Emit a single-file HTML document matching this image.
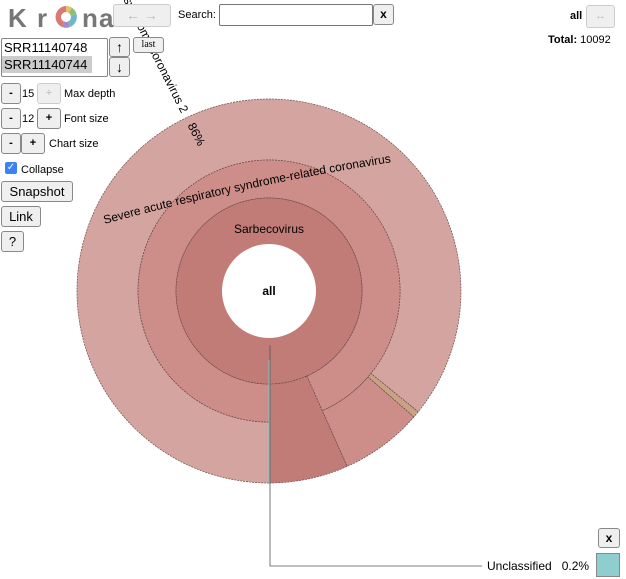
<!DOCTYPE html>
<html><head><style>
body{margin:0;width:626px;height:579px;overflow:hidden;background:#fff;font-family:"Liberation Sans",Arial,sans-serif;font-size:11px;position:relative}
.a{position:absolute}
.b{position:absolute;box-sizing:border-box;border:1px solid #888;border-radius:3px;background:#efefef;text-align:center;color:#000}
.d{color:#bbb;border-color:#ccc}
.L{position:absolute;top:3px;font-size:26px;font-weight:bold;color:#777}
</style></head><body>
<svg class="a" style="left:0;top:0" width="626" height="579">
<g stroke="#6e4a48" stroke-width="0.7" stroke-dasharray="2 1">
<path d="M269,483 A192 192 0 1 1 418.2,411.8 L370.8,373.4 A131 131 0 1 0 269,422 Z" fill="#d4a5a0"/>
<path d="M418.2,411.8 L413.9,417 L367.9,377 L370.8,373.4 Z" fill="#c8a283"/>
<path d="M413.9,417 A192 192 0 0 1 347.1,466.4 L322.3,410.7 A131 131 0 0 0 367.9,377 Z" fill="#cd8e8a"/>
<path d="M269,422 A131 131 0 1 1 322.3,410.7 L306.8,376 A93 93 0 1 0 269,384 Z" fill="#cd8e8a"/>
<circle cx="269" cy="291" r="93" fill="#c27c78"/>
<path d="M306.8,376 L347.1,466.4 A192 192 0 0 1 269,483 L269,384 A93 93 0 0 0 306.8,376 Z" fill="#c27c78"/>
</g>
<rect x="268.5" y="360" width="2" height="123" fill="#7fc8c8"/>
<circle cx="269" cy="291" r="47" fill="#fff"/>
<path d="M270,345 V566 H482" stroke="#555" stroke-width="0.8" fill="none"/>
<defs><path id="arc" d="M90,228 Q248,184 406,160"/></defs>
<text font-size="12" fill="#000" font-family="Liberation Sans,Arial,sans-serif"><textPath href="#arc" startOffset="50%" text-anchor="middle">Severe acute respiratory syndrome-related coronavirus</textPath></text>
<text x="269" y="233" font-size="12" text-anchor="middle" font-family="Liberation Sans,Arial,sans-serif">Sarbecovirus</text>
<text x="269" y="295" font-size="12" font-weight="bold" text-anchor="middle" font-family="Liberation Sans,Arial,sans-serif">all</text>
<g transform="translate(185,112) rotate(63)" font-size="12" font-family="Liberation Sans,Arial,sans-serif">
<text x="0" y="4" text-anchor="end">Severe acute respiratory syndrome coronavirus 2</text>
<text x="37" y="4" text-anchor="end">86%</text>
</g>
</svg>
<div class="L" style="left:8px">K</div>
<div class="L" style="left:37px">r</div>
<svg class="a" style="left:54px;top:5px" width="24" height="24"><g transform="translate(12,12)">
<path d="M0,0 L0,-11 A11 11 0 0 1 10.5,-3 Z" fill="#8fbf6e"/>
<path d="M0,0 L10.5,-3 A11 11 0 0 1 4,10 Z" fill="#6fb8c8"/>
<path d="M0,0 L4,10 A11 11 0 0 1 -4,10 Z" fill="#a888c8"/>
<path d="M0,0 L-4,10 A11 11 0 0 1 0,-11 Z" fill="#d87a72"/>
<path d="M0,0 L0,-11 A11 11 0 0 1 6,-9 Z" fill="#e8c070"/>
<circle r="5" fill="#fff"/></g></svg>
<div class="L" style="left:82px">n</div>
<div class="L" style="left:99px">a</div>
<div class="b d" style="left:113px;top:4px;width:58px;height:23px;font-size:14px;line-height:20px">← →</div>
<div class="a" style="left:178px;top:9px;font-size:11px">Search:</div>
<div class="a" style="left:219px;top:4px;width:152px;height:20px;border:1px solid #777;border-radius:2px"></div>
<div class="b" style="left:373px;top:4px;width:21px;height:21px;font-size:12px;line-height:18px;font-weight:bold">x</div>
<div class="a" style="left:570px;top:10px;font-weight:bold">all</div>
<div class="b d" style="left:586px;top:5px;width:29px;height:23px;line-height:20px">↔</div>
<div class="a" style="left:548px;top:34px"><b>Total:</b> 10092</div>
<div class="a" style="left:1px;top:38px;width:105px;height:37px;border:1px solid #888;border-radius:2px;font-size:13px;line-height:17px">
<div style="padding-left:2px">SRR11140748</div><div style="padding-left:2px;background:#ccc;width:88px">SRR11140744</div></div>
<div class="b" style="left:109px;top:37px;width:21px;height:20px;font-size:14px;line-height:18px">↑</div>
<div class="b" style="left:109px;top:57px;width:21px;height:20px;font-size:14px;line-height:18px">↓</div>
<div class="b" style="left:133px;top:37px;width:31px;height:16px;font-family:'Liberation Serif',serif;font-size:10px;line-height:14px">last</div>
<div class="b" style="left:1px;top:83px;width:20px;height:21px;line-height:19px;font-weight:bold">-</div>
<div class="a" style="left:22px;top:88px">15</div>
<div class="b d" style="left:37px;top:83px;width:24px;height:21px;line-height:19px">+</div>
<div class="a" style="left:64px;top:88px">Max depth</div>
<div class="b" style="left:1px;top:108px;width:20px;height:21px;line-height:19px;font-weight:bold">-</div>
<div class="a" style="left:22px;top:113px">12</div>
<div class="b" style="left:37px;top:108px;width:24px;height:21px;line-height:19px;font-weight:bold">+</div>
<div class="a" style="left:64px;top:113px">Font size</div>
<div class="b" style="left:1px;top:133px;width:20px;height:21px;line-height:19px;font-weight:bold">-</div>
<div class="b" style="left:21px;top:133px;width:24px;height:21px;line-height:19px;font-weight:bold">+</div>
<div class="a" style="left:49px;top:138px">Chart size</div>
<div class="a" style="left:5px;top:162px;width:12px;height:12px;background:#3b82f6;border-radius:2px;color:#fff;font-size:10px;line-height:12px;text-align:center">✓</div>
<div class="a" style="left:21px;top:164px">Collapse</div>
<div class="b" style="left:1px;top:181px;width:72px;height:21px;font-size:13px;line-height:19px">Snapshot</div>
<div class="b" style="left:1px;top:206px;width:40px;height:21px;font-size:13px;line-height:19px">Link</div>
<div class="b" style="left:1px;top:231px;width:23px;height:21px;font-size:13px;line-height:19px">?</div>
<div class="b" style="left:598px;top:528px;width:22px;height:20px;font-size:12px;line-height:18px;font-weight:bold">x</div>
<div class="a" style="left:487px;top:559px;font-size:12px">Unclassified&nbsp;&nbsp;&nbsp;0.2%</div>
<div class="a" style="left:596px;top:553px;width:24px;height:24px;background:#8ecece;border:1px solid #888;box-sizing:border-box"></div>
</body></html>
